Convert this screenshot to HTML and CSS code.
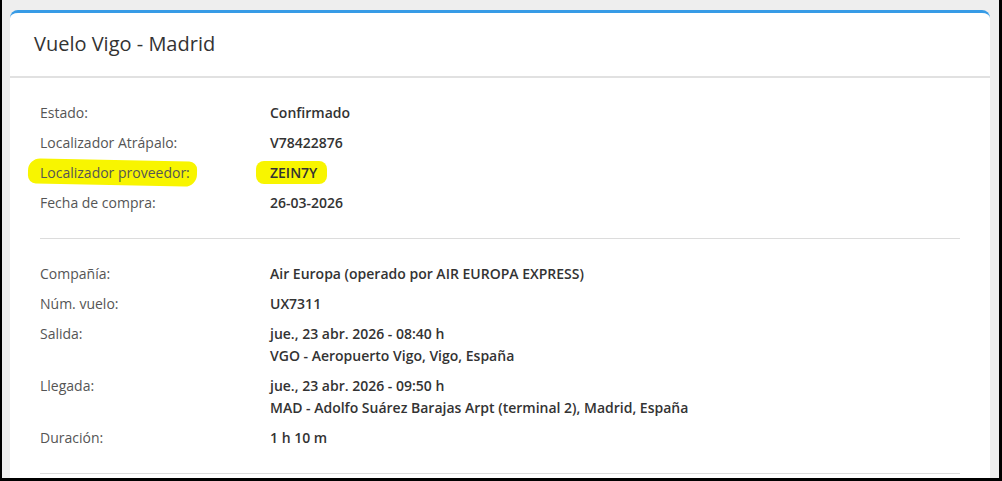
FILE: index.html
```html
<!DOCTYPE html>
<html lang="es">
<head>
<meta charset="utf-8">
<title>Vuelo Vigo - Madrid</title>
<link rel="stylesheet" href="styles.css">
</head>
<body>
<div class="frame">
  <div class="card">
    <div class="card-header">
      <h1 class="title">Vuelo Vigo - Madrid</h1>
    </div>
    <div class="card-body">
      <section class="section">
        <dl class="rows">
          <dt class="label">Estado:</dt>
          <dd class="value">Confirmado</dd>
          <dt class="label">Localizador Atrápalo:</dt>
          <dd class="value">V78422876</dd>
          <dt class="label"><span class="mark mark-label">Localizador proveedor:</span></dt>
          <dd class="value"><span class="mark mark-value">ZEIN7Y</span></dd>
          <dt class="label">Fecha de compra:</dt>
          <dd class="value">26-03-2026</dd>
        </dl>
      </section>
      <section class="section">
        <dl class="rows">
          <dt class="label">Compañía:</dt>
          <dd class="value">Air Europa (operado por AIR EUROPA EXPRESS)</dd>
          <dt class="label">Núm. vuelo:</dt>
          <dd class="value">UX7311</dd>
          <dt class="label">Salida:</dt>
          <dd class="value">jue., 23 abr. 2026 - 08:40 h<br>VGO - Aeropuerto Vigo, Vigo, España</dd>
          <dt class="label">Llegada:</dt>
          <dd class="value">jue., 23 abr. 2026 - 09:50 h<br>MAD - Adolfo Suárez Barajas Arpt (terminal 2), Madrid, España</dd>
          <dt class="label">Duración:</dt>
          <dd class="value">1 h 10 m</dd>
        </dl>
      </section>
    </div>
  </div>
</div>
</body>
</html>
```

FILE: styles.css
```css
* { box-sizing: border-box; }
html, body { margin: 0; padding: 0; }
body {
  font-family: "Open Sans", "Liberation Sans", sans-serif;
  background: #000;
}
.frame {
  width: 1002px;
  height: 481px;
  background: #eeeeee;
  border-left: 2px solid #000;
  border-right: 3px solid #000;
  border-bottom: 3px solid #000;
  padding: 10px 9px 0 8px;
  overflow: hidden;
}
.card {
  background: #fff;
  border-top: 3px solid #379be6;
  border-radius: 8px 8px 0 0;
  height: 600px;
}
.card-header {
  height: 65px;
  border-bottom: 2px solid #e1e1e1;
  padding: 0 24px;
  display: flex;
  align-items: center;
}
.title {
  margin: 0;
  font-size: 20px;
  font-weight: 400;
  color: #333;
  padding-bottom: 2px;
}
.card-body {
  padding: 0 30px;
}
.section {
  padding: 24px 0 24px;
  border-bottom: 1px solid #dcdcdc;
}
.rows {
  margin: 0;
  display: grid;
  grid-template-columns: 230px 1fr;
  row-gap: 8px;
  font-size: 14px;
  line-height: 22px;
}
.label {
  margin: 0;
  color: #555;
}
.value {
  margin: 0;
  color: #333;
  font-weight: 600;
}
.mark {
  position: relative;
  isolation: isolate;
}
.mark::before {
  content: "";
  position: absolute;
  z-index: -1;
  background: #f8f500;
}
.mark-label::before {
  left: -12px;
  right: -7px;
  top: -3px;
  bottom: -3px;
  border-radius: 12px 8px 12px 8px;
  transform: rotate(1.2deg);
}
.mark-value::before {
  left: -14px;
  right: -10px;
  top: -2px;
  bottom: -2px;
  border-radius: 8px;
}
```
